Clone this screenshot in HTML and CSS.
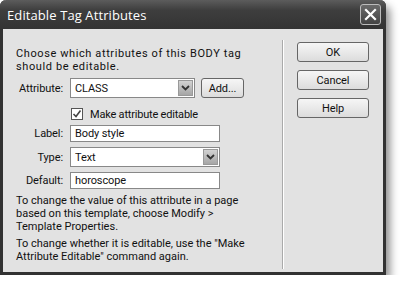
FILE: index.html
```html
<!DOCTYPE html>
<html>
<head>
  <meta charset="UTF-8">
  <title>Editable Tag Attributes</title>
  <link rel="stylesheet" href="styles.css">
</head>
<body>
  <div class="dialog">
    <div class="titlebar">
      <span class="title">Editable Tag Attributes</span>
      <span class="close">
        <svg width="13" height="13" viewBox="0 0 13 13"><path d="M2 2 L11 11 M11 2 L2 11" stroke="#fff" stroke-width="2.2" stroke-linecap="square"/></svg>
      </span>
    </div>
    <div class="content">
      <div class="form">
        <p class="intro">Choose which attributes of this BODY tag<br>should be editable.</p>
        <div class="row">
          <span class="lbl">Attribute:</span>
          <div class="field select attr">CLASS<span class="arrow"><svg width="9" height="6" viewBox="0 0 9 6"><path d="M1 1 L4.5 4.5 L8 1" fill="none" stroke="#333" stroke-width="1.8"/></svg></span></div>
          <span class="btn add">Add...</span>
        </div>
        <div class="row check">
          <span class="box"><svg width="10" height="10" viewBox="0 0 10 10"><path d="M1.5 5 L4 7.5 L8.5 1.5" fill="none" stroke="#444" stroke-width="1.6"/></svg></span>
          <span class="check-text">Make attribute editable</span>
        </div>
        <div class="row">
          <span class="lbl">Label:</span>
          <div class="field">Body style</div>
        </div>
        <div class="row">
          <span class="lbl">Type:</span>
          <div class="field select">Text<span class="arrow"><svg width="9" height="6" viewBox="0 0 9 6"><path d="M1 1 L4.5 4.5 L8 1" fill="none" stroke="#333" stroke-width="1.8"/></svg></span></div>
        </div>
        <div class="row">
          <span class="lbl">Default:</span>
          <div class="field">horoscope</div>
        </div>
        <p class="note">To change the value of this attribute in a page<br>based on this template, choose Modify &gt;<br>Template Properties.</p>
        <p class="note second">To change whether it is editable, use the "Make<br>Attribute Editable" command again.</p>
      </div>
      <div class="sep"></div>
      <div class="buttons">
        <span class="btn">OK</span>
        <span class="btn">Cancel</span>
        <span class="btn">Help</span>
      </div>
    </div>
  </div>
</body>
</html>
```

FILE: styles.css
```css
body {
  margin: 0;
  background: #fff;
  font-family: Roboto, "Open Sans", sans-serif;
  font-size: 11px;
  color: #111;
}

.dialog {
  width: 380px;
  height: 272px;
  border: 3px solid #323232;
  border-top: none;
  border-radius: 6px 6px 0 0;
  background: #e2e2e2;
  box-shadow: 4px 6px 9px rgba(0, 0, 0, 0.45);
  display: flex;
  flex-direction: column;
}

.titlebar {
  height: 29px;
  margin: 0 -3px;
  padding: 0 5px 0 7px;
  border-radius: 6px 6px 0 0;
  background: linear-gradient(#5c5c5c, #3e3e3e 35%, #333);
  display: flex;
  align-items: center;
  justify-content: space-between;
}

.title {
  color: #fff;
  font-family: "Open Sans", sans-serif;
  font-size: 13px;
  letter-spacing: 0.1px;
}

.close {
  width: 19px;
  height: 19px;
  border: 1px solid #bbb;
  border-radius: 3px;
  background: linear-gradient(#6a6a6a, #444);
  display: flex;
  align-items: center;
  justify-content: center;
}

.content {
  flex: 1;
  display: flex;
}

.form {
  width: 266px;
  padding: 18px 0 0 13px;
}

.intro, .note {
  margin: 0;
  line-height: 13px;
}

.intro {
  margin-bottom: 5px;
  letter-spacing: 0.6px;
}

.note {
  letter-spacing: 0;
}

.second {
  margin-top: 4px;
}

.row {
  display: flex;
  align-items: center;
  margin-bottom: 5px;
}

.lbl {
  width: 47px;
  text-align: right;
  margin-right: 7px;
  letter-spacing: -0.1px;
}

.field {
  box-sizing: border-box;
  width: 150px;
  height: 17px;
  border: 1px solid #888;
  background: #fff;
  padding-left: 4px;
  display: flex;
  align-items: center;
  letter-spacing: -0.1px;
}

.select {
  height: 20px;
  justify-content: space-between;
  padding-right: 1px;
}

.attr {
  width: 125px;
}

.arrow {
  width: 15px;
  height: 16px;
  background: linear-gradient(#d2d2d2, #a6a6a6);
  border: 1px solid #999;
  box-sizing: border-box;
  display: flex;
  align-items: center;
  justify-content: center;
}

.check {
  height: 12px;
  padding-left: 55px;
  margin-top: 10px;
}

.box {
  box-sizing: border-box;
  width: 12px;
  height: 12px;
  border: 1px solid #555;
  background: #fff;
  margin-right: 7px;
  display: flex;
  align-items: center;
  justify-content: center;
}

.check-text {
  letter-spacing: -0.2px;
}

.btn {
  box-sizing: border-box;
  width: 72px;
  height: 20px;
  border: 1px solid #666;
  border-radius: 3px;
  background: linear-gradient(#f6f6f6, #dcdcdc);
  display: flex;
  align-items: center;
  justify-content: center;
  letter-spacing: -0.1px;
}

.add {
  width: 43px;
  margin-left: 6px;
}

.sep {
  width: 1px;
  margin: 11px 0 3px;
  background: #fff;
  border-left: 1px solid #aaa;
}

.buttons {
  padding: 13px 0 0 13px;
  display: flex;
  flex-direction: column;
  gap: 8px;
}
```
